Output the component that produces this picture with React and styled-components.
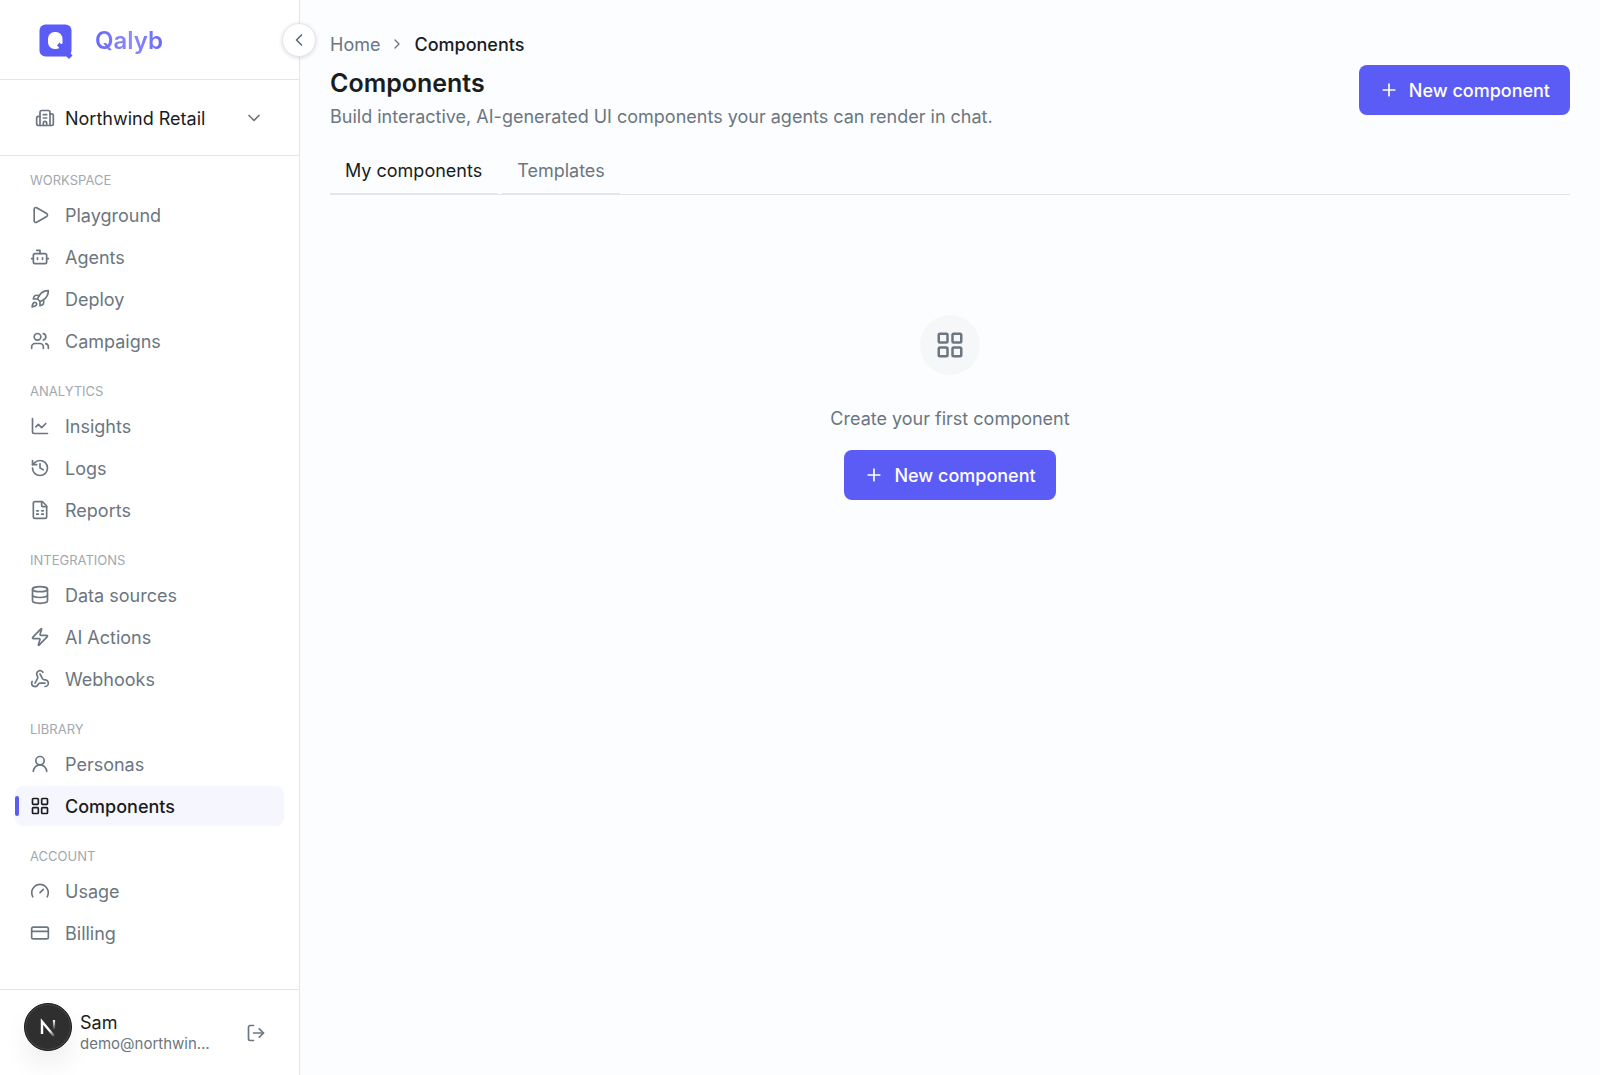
import React, { useState } from 'react';

import styled, { createGlobalStyle } from 'styled-components';
import {
  Bot,
  Building2,
  ChartLine,
  ChevronDown,
  ChevronLeft,
  ChevronRight,
  CreditCard,
  Database,
  FileSpreadsheet,
  Gauge,
  History,
  LayoutGrid,
  LogOut,
  Play,
  Plus,
  Rocket,
  UserRound,
  Users,
  Webhook,
  Zap,
} from 'lucide-react';

const GlobalStyle = createGlobalStyle`
  * {
    box-sizing: border-box;
  }

  body {
    margin: 0;
    background: #fcfdff;
    color: #1a1c20;
    font-family: Inter, 'Liberation Sans', sans-serif;
    font-size: 18px;
    line-height: 26px;
  }

  button {
    padding: 0;
    border: 0;
    background: none;
    color: inherit;
    font: inherit;
    cursor: pointer;
  }

  a {
    color: inherit;
    text-decoration: none;
  }
`;

const Layout = styled.div`
  display: flex;
  min-height: 100vh;
`;

const Sidebar = styled.aside`
  position: relative;
  display: flex;
  flex-direction: column;
  flex: none;
  width: 300px;
  border-right: 1px solid #e3e5ec;
  background: #ffffff;
`;

const Label = styled.span`
  padding-top: 2px;
`;

const Brand = styled.a`
  display: flex;
  align-items: center;
  gap: 20px;
  height: 80px;
  padding: 0 35px;
  border-bottom: 1px solid #e3e5ec;
`;

const BrandName = styled(Label)`
  background: linear-gradient(90deg, #6765f6, #8d8bfc 55%, #6765f6);
  background-clip: text;
  color: transparent;
  font-size: 24px;
  font-weight: 600;
  line-height: 32px;
`;

const CollapseButton = styled.button`
  position: absolute;
  top: 23px;
  right: -17px;
  display: flex;
  align-items: center;
  justify-content: center;
  width: 34px;
  height: 34px;
  border: 1px solid #e3e5ec;
  border-radius: 50%;
  background: #ffffff;
  box-shadow: 0 1px 4px rgba(20, 24, 40, 0.14);
  color: #5f6972;
`;

const OrgSwitcher = styled.button`
  display: flex;
  align-items: center;
  gap: 10px;
  height: 76px;
  padding: 0 35px;
  border-bottom: 1px solid #e3e5ec;
  text-align: left;

  svg {
    color: #6b7680;
  }
`;

const OrgName = styled(Label)`
  flex: 1;
`;

const Nav = styled.nav`
  display: flex;
  flex-direction: column;
  flex: 1;
  gap: 20px;
  padding: 14px 15px;
`;

const SectionTitle = styled.h2`
  margin: 0 0 5px;
  padding: 0 15px;
  color: #a2a8af;
  font-size: 13px;
  font-weight: 400;
  line-height: 20px;
  text-transform: uppercase;
`;

const NavList = styled.ul`
  display: flex;
  flex-direction: column;
  gap: 2px;
  margin: 0;
  padding: 0;
  list-style: none;
`;

const NavLink = styled.a`
  position: relative;
  display: flex;
  align-items: center;
  gap: 15px;
  height: 40px;
  padding: 0 15px;
  border-radius: 8px;
  background: ${(p) => (p.$active ? '#f6f6fe' : 'transparent')};
  color: ${(p) => (p.$active ? '#1a1c20' : '#6b7680')};
  font-weight: ${(p) => (p.$active ? 500 : 400)};

  &::before {
    content: '';
    display: ${(p) => (p.$active ? 'block' : 'none')};
    position: absolute;
    top: 10px;
    left: 0;
    width: 4px;
    height: 20px;
    border-radius: 2px;
    background: #5b5bf6;
  }
`;

const UserBar = styled.footer`
  position: relative;
  display: flex;
  align-items: center;
  height: 86px;
  padding: 0 33px 0 80px;
  border-top: 1px solid #e3e5ec;
`;

const Badge = styled.button`
  position: absolute;
  bottom: 24px;
  left: 24px;
  display: flex;
  align-items: center;
  justify-content: center;
  width: 48px;
  height: 48px;
  border: 1px solid #171717;
  border-radius: 50%;
  background: #2f2f2f;
  box-shadow: inset 0 0 0 1px #4a4a4a, 0 16px 32px -8px rgba(0, 0, 0, 0.14);
`;

const UserInfo = styled.div`
  flex: 1;
  min-width: 0;
`;

const UserName = styled.div`
  line-height: 22px;
`;

const UserEmail = styled.div`
  color: #6b7680;
  font-size: 15px;
  line-height: 20px;
`;

const LogoutButton = styled.button`
  display: flex;
  color: #6b7680;
`;

const Main = styled.main`
  flex: 1;
  min-width: 0;
  padding: 30px;
`;

const Breadcrumb = styled.nav`
  display: flex;
  align-items: center;
  gap: 9px;
  height: 27px;
  margin-bottom: 8px;
  color: #6b7680;
`;

const Current = styled(Label)`
  color: #1a1c20;
  font-weight: 500;
`;

const PageHeader = styled.header`
  display: flex;
  align-items: flex-start;
  justify-content: space-between;
  gap: 20px;
  margin-bottom: 25px;
`;

const Title = styled.h1`
  margin: 0 0 1px;
  font-size: 25px;
  font-weight: 600;
  line-height: 37px;
`;

const Subtitle = styled.p`
  margin: 0;
  color: #6b7680;
  line-height: 27px;
`;

const PrimaryButton = styled.button`
  display: flex;
  align-items: center;
  gap: 10px;
  height: 50px;
  padding: 0 20px;
  border-radius: 8px;
  background: #5b5bf6;
  color: #ffffff;
  font-weight: 500;
  white-space: nowrap;
`;

const Tabs = styled.div`
  display: flex;
  gap: 5px;
  border-bottom: 1px solid #e3e5ec;
`;

const Tab = styled.button`
  height: 40px;
  margin-bottom: -1px;
  padding: 0 15px 6px;
  border-bottom: 2px solid #e3e5ec;
  color: ${(p) => (p.$active ? '#1a1c20' : '#6b7680')};
`;

const EmptyState = styled.section`
  display: flex;
  flex-direction: column;
  align-items: center;
  padding: 120px 0;
`;

const EmptyIcon = styled.div`
  display: flex;
  align-items: center;
  justify-content: center;
  width: 60px;
  height: 60px;
  border-radius: 50%;
  background: #f6f7f9;
  color: #6b7680;
`;

const EmptyText = styled.p`
  margin: 30px 0 18px;
  color: #6b7680;
  line-height: 27px;
`;

const sections = [
  {
    title: 'Workspace',
    items: [
      { label: 'Playground', icon: Play },
      { label: 'Agents', icon: Bot },
      { label: 'Deploy', icon: Rocket },
      { label: 'Campaigns', icon: Users },
    ],
  },
  {
    title: 'Analytics',
    items: [
      { label: 'Insights', icon: ChartLine },
      { label: 'Logs', icon: History },
      { label: 'Reports', icon: FileSpreadsheet },
    ],
  },
  {
    title: 'Integrations',
    items: [
      { label: 'Data sources', icon: Database },
      { label: 'AI Actions', icon: Zap },
      { label: 'Webhooks', icon: Webhook },
    ],
  },
  {
    title: 'Library',
    items: [
      { label: 'Personas', icon: UserRound },
      { label: 'Components', icon: LayoutGrid },
    ],
  },
  {
    title: 'Account',
    items: [
      { label: 'Usage', icon: Gauge },
      { label: 'Billing', icon: CreditCard },
    ],
  },
];

const tabs = ['My components', 'Templates'];

function Logo() {
  return (
    <svg width="40" height="40" viewBox="0 0 40 40" aria-hidden="true">
      <rect x="4.5" y="4.5" width="32" height="32" rx="6" fill="#5b5bf6" />
      <path d="M34 32l3.5 3.5-3.5 3.5-4-4z" fill="#5b5bf6" />
      <rect x="13" y="12" width="14.5" height="17" rx="6.5" fill="#ffffff" />
      <path d="M24.5 22.5l1.5 1.5h2v5.5h-4v-2l-2-2z" fill="#5b5bf6" />
    </svg>
  );
}

function BadgeMark() {
  return (
    <svg width="20" height="20" viewBox="0 0 20 20" fill="none" aria-hidden="true">
      <defs>
        <linearGradient id="diagonal" x1="9" y1="9" x2="17" y2="19" gradientUnits="userSpaceOnUse">
          <stop offset="0.4" stopColor="#ffffff" />
          <stop offset="1" stopColor="#ffffff" stopOpacity="0.1" />
        </linearGradient>
        <linearGradient id="stem" x1="16" y1="3" x2="16" y2="13" gradientUnits="userSpaceOnUse">
          <stop stopColor="#ffffff" />
          <stop offset="1" stopColor="#ffffff" stopOpacity="0" />
        </linearGradient>
      </defs>
      <path d="M4 17V4.5l12 14.5" stroke="url(#diagonal)" strokeWidth="2.4" />
      <path d="M16 3v11" stroke="url(#stem)" strokeWidth="2.2" />
    </svg>
  );
}

function NavSection({ title, items }) {
  return (
    <section>
      <SectionTitle>{title}</SectionTitle>
      <NavList>
        {items.map(({ label, icon: Icon }) => (
          <li key={label}>
            <NavLink href="#" $active={label === 'Components'}>
              <Icon size={20} strokeWidth={2} />
              <Label>{label}</Label>
            </NavLink>
          </li>
        ))}
      </NavList>
    </section>
  );
}

function NewComponentButton() {
  return (
    <PrimaryButton type="button">
      <Plus size={20} strokeWidth={2} />
      <Label>New component</Label>
    </PrimaryButton>
  );
}

function App() {
  const [activeTab, setActiveTab] = useState(tabs[0]);

  return (
    <Layout>
      <GlobalStyle />
      <Sidebar>
        <Brand href="#">
          <Logo />
          <BrandName>Qalyb</BrandName>
        </Brand>
        <CollapseButton type="button" aria-label="Collapse sidebar">
          <ChevronLeft size={20} strokeWidth={2} />
        </CollapseButton>
        <OrgSwitcher type="button">
          <Building2 size={20} strokeWidth={2} />
          <OrgName>Northwind Retail</OrgName>
          <ChevronDown size={20} strokeWidth={2} />
        </OrgSwitcher>
        <Nav>
          {sections.map((section) => (
            <NavSection key={section.title} {...section} />
          ))}
        </Nav>
        <UserBar>
          <Badge type="button" aria-label="Open tools">
            <BadgeMark />
          </Badge>
          <UserInfo>
            <UserName>Sam</UserName>
            <UserEmail>demo@northwin…</UserEmail>
          </UserInfo>
          <LogoutButton type="button" aria-label="Log out">
            <LogOut size={20} strokeWidth={2} />
          </LogoutButton>
        </UserBar>
      </Sidebar>
      <Main>
        <Breadcrumb aria-label="Breadcrumb">
          <Label as="a" href="#">Home</Label>
          <ChevronRight size={16} strokeWidth={2} />
          <Current>Components</Current>
        </Breadcrumb>
        <PageHeader>
          <div>
            <Title>Components</Title>
            <Subtitle>
              Build interactive, AI-generated UI components your agents can render in chat.
            </Subtitle>
          </div>
          <NewComponentButton />
        </PageHeader>
        <Tabs role="tablist">
          {tabs.map((tab) => (
            <Tab
              key={tab}
              type="button"
              role="tab"
              aria-selected={tab === activeTab}
              $active={tab === activeTab}
              onClick={() => setActiveTab(tab)}
            >
              {tab}
            </Tab>
          ))}
        </Tabs>
        <EmptyState>
          <EmptyIcon>
            <LayoutGrid size={30} strokeWidth={2} />
          </EmptyIcon>
          <EmptyText>Create your first component</EmptyText>
          <NewComponentButton />
        </EmptyState>
      </Main>
    </Layout>
  );
}

export default App;
